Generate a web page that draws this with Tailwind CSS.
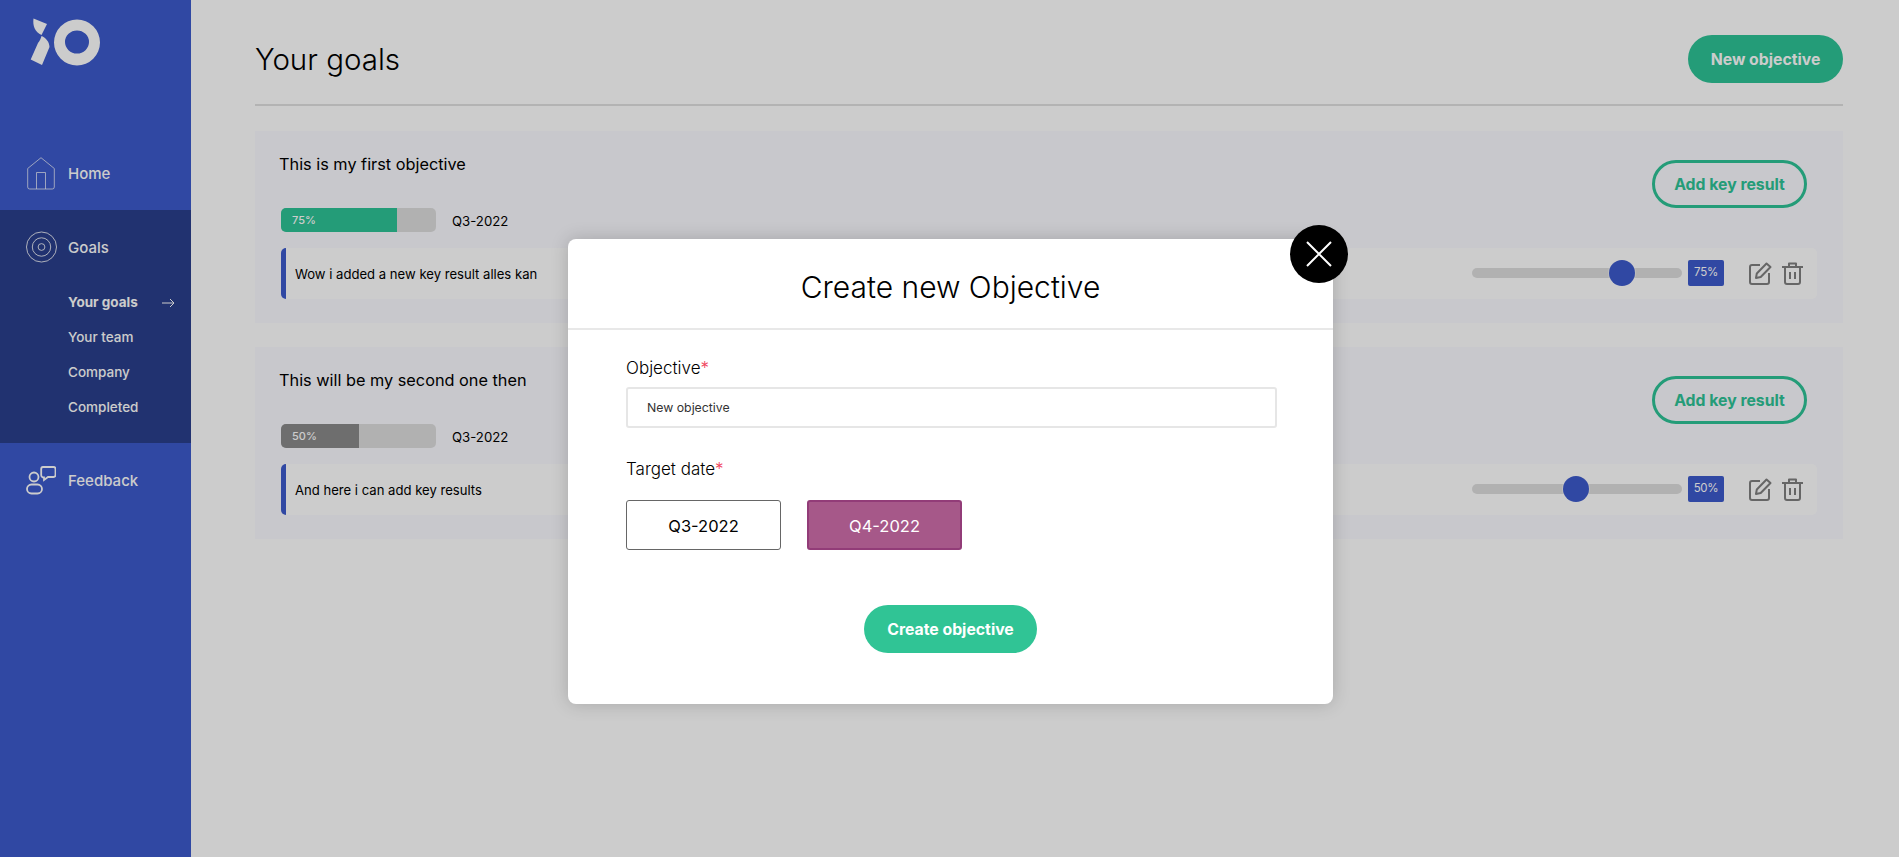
<!DOCTYPE html>
<html lang="en">
<head>
  <meta charset="UTF-8" />
  <title>Your goals</title>
  <script src="https://cdn.jsdelivr.net/npm/@tailwindcss/browser@4"></script>
</head>
<body class="relative h-screen overflow-hidden bg-white font-['Inter',sans-serif] text-black">

  <div class="flex h-full">
    <!-- Sidebar -->
    <aside class="w-[191px] shrink-0 bg-[#3c5acc] text-white">
      <div class="h-[137px] pl-[30px] pt-[18px]">
        <svg width="72" height="48" viewBox="0 0 72 48" fill="#fff">
          <path d="M3.5 0.5L17 6L11.5 17C5 14 2.5 8 3.5 0.5Z" />
          <path d="M11.5 18C16 20 19.5 24 19.5 29L12 47L0.7 41.5L8 25C9.5 23 11 20.5 11.5 18Z" />
          <path fill-rule="evenodd" d="M47 1.5a23 23 0 1 1 0 46a23 23 0 1 1 0-46ZM47 12.5a12 11.5 0 1 0 0 23a12 11.5 0 1 0 0-23Z" />
        </svg>
      </div>

      <a class="flex h-[73px] items-center gap-[13px] pl-[27px] text-[15px] font-medium">
        <svg width="28" height="33" viewBox="0 0 28 33" fill="none" stroke="#fff" stroke-opacity=".7" stroke-width="1">
          <path d="M14 .7L27.3 11.5V30a2 2 0 0 1-2 2H2.700a2 2 0 0 1-2-2V11.500Z" />
          <path d="M9.500 32V15.500h9V32" />
        </svg>
        <span class="pt-[2px]">Home</span>
      </a>

      <div class="h-[233px] bg-[#2a3f8c]">
        <a class="flex h-[74px] items-center gap-[11px] pl-[26px] text-[15px] font-medium">
          <svg width="31" height="32" viewBox="0 0 32 32" fill="none" stroke="#fff" stroke-opacity=".85" stroke-width="1">
            <circle cx="16" cy="16" r="15.500" />
            <circle cx="16" cy="16" r="9.500" />
            <circle cx="16" cy="16" r="3.500" />
          </svg>
          <span class="pt-[2px]">Goals</span>
        </a>
        <ul class="pl-[68px] pr-[16px] pt-[1px] text-[13.5px] font-medium">
          <li class="flex h-[35px] items-center justify-between font-bold">
            Your goals
            <svg width="13" height="10" viewBox="0 0 13 10" fill="none" stroke="#fff" stroke-width="1"><path d="M0 5h12M8 1l4 4l-4 4" /></svg>
          </li>
          <li class="flex h-[35px] items-center">Your team</li>
          <li class="flex h-[35px] items-center">Company</li>
          <li class="flex h-[35px] items-center">Completed</li>
        </ul>
      </div>

      <a class="flex h-[74px] items-center gap-[12px] pl-[26px] text-[15px] font-medium">
        <svg width="30" height="29" viewBox="0 0 30 29" fill="none" stroke="#fff" stroke-width="1.800">
          <circle cx="8" cy="11" r="4.500" />
          <rect x="1" y="18.500" width="15" height="9" rx="4.500" />
          <path d="M17 1h10.500a2 2 0 0 1 2 2v6a2 2 0 0 1-2 2H22L18 14V11.500a2.500 2.500 0 0 1-2.800-2.500V3a2 2 0 0 1 1.800-2Z" />
        </svg>
        <span class="pt-[2px]">Feedback</span>
      </a>
    </aside>

    <!-- Main -->
    <main class="flex-1 pl-[64px] pr-[56px]">
      <header class="flex h-[106px] items-start justify-between border-b-2 border-[#e0e0e0] pt-[35px]">
        <h1 class="text-[29.5px] font-light leading-[48px]">Your goals</h1>
        <button class="h-[48px] w-[155px] rounded-full bg-[#2dc396] pt-[1px] text-[15.8px] font-bold text-white">New objective</button>
      </header>

      <section class="mt-[25px] flex flex-col gap-[24px]">
        <!-- Objective 1 -->
        <article class="h-[192px] bg-[#fafaff] px-[26px]">
          <div class="flex items-start justify-between pr-[10px] pt-[29px]">
            <h2 class="ml-[-2px] text-[16.3px] leading-[8px]">This is my first objective</h2>
            <button class="h-[48px] w-[155px] rounded-full border-[3px] border-[#2dc396] pt-[1px] text-[15.8px] font-bold text-[#2dc396]">Add key result</button>
          </div>
          <div class="flex items-center gap-[16px]">
            <div class="h-[24px] w-[155px] overflow-hidden rounded-[5px] bg-[#dedede]">
              <div class="flex h-full w-[75%] items-center bg-[#2dc396] pl-[11px] text-[11px] font-medium text-white">75%</div>
            </div>
            <span class="pt-[3px] text-[13.2px]">Q3-2022</span>
          </div>
          <div class="mt-[16px] flex h-[51px] items-center justify-between rounded-[5px] border-l-[5px] border-[#3c5acc] bg-white pl-[9px] pr-[14px]">
            <span class="pt-[2px] text-[13.1px]">Wow i added a new key result alles kan</span>
            <div class="mt-[-1px] flex items-center">
              <div class="relative h-[10px] w-[210px] rounded-full bg-[#dedede]">
                <span class="absolute left-[137px] top-[-8px] size-[26px] rounded-full bg-[#3c5acc] ring-1 ring-white/40"></span>
              </div>
              <span class="ml-[6px] flex h-[26px] w-[36px] items-center justify-center rounded-[2px] bg-[#3c5acc] text-[11.5px] tracking-[-0.3px] text-white">75%</span>
              <svg class="ml-[25px]" width="23" height="23" viewBox="0 0 23 23" fill="none" stroke="#808080" stroke-width="2" stroke-linejoin="round">
                <path d="M11 3H3a2 2 0 0 0-2 2v15a2 2 0 0 0 2 2h15a2 2 0 0 0 2-2v-9" />
                <path d="M7 16l.8-4.500L17.500 1.500l4 3.500l-9.800 10Z" />
              </svg>
              <svg class="ml-[10px]" width="21" height="23" viewBox="0 0 21 23" fill="none" stroke="#808080" stroke-width="2" stroke-linejoin="round">
                <path d="M0 5h21M7 5V1.500h7V5M3 5v15a2 2 0 0 0 2 2h11a2 2 0 0 0 2-2V5M8 10v7M13 10v7" />
              </svg>
            </div>
          </div>
        </article>

        <!-- Objective 2 -->
        <article class="h-[192px] bg-[#fafaff] px-[26px]">
          <div class="flex items-start justify-between pr-[10px] pt-[29px]">
            <h2 class="ml-[-2px] text-[16.3px] leading-[8px]">This will be my second one then</h2>
            <button class="h-[48px] w-[155px] rounded-full border-[3px] border-[#2dc396] pt-[1px] text-[15.8px] font-bold text-[#2dc396]">Add key result</button>
          </div>
          <div class="flex items-center gap-[16px]">
            <div class="h-[24px] w-[155px] overflow-hidden rounded-[5px] bg-[#dedede]">
              <div class="flex h-full w-[50%] items-center bg-[#8a8a8a] pl-[11px] text-[11px] font-medium text-white">50%</div>
            </div>
            <span class="pt-[3px] text-[13.2px]">Q3-2022</span>
          </div>
          <div class="mt-[16px] flex h-[51px] items-center justify-between rounded-[5px] border-l-[5px] border-[#3c5acc] bg-white pl-[9px] pr-[14px]">
            <span class="pt-[2px] text-[13.1px]">And here i can add key results</span>
            <div class="mt-[-1px] flex items-center">
              <div class="relative h-[10px] w-[210px] rounded-full bg-[#dedede]">
                <span class="absolute left-[91px] top-[-8px] size-[26px] rounded-full bg-[#3c5acc] ring-1 ring-white/40"></span>
              </div>
              <span class="ml-[6px] flex h-[26px] w-[36px] items-center justify-center rounded-[2px] bg-[#3c5acc] text-[11.5px] tracking-[-0.3px] text-white">50%</span>
              <svg class="ml-[25px]" width="23" height="23" viewBox="0 0 23 23" fill="none" stroke="#808080" stroke-width="2" stroke-linejoin="round">
                <path d="M11 3H3a2 2 0 0 0-2 2v15a2 2 0 0 0 2 2h15a2 2 0 0 0 2-2v-9" />
                <path d="M7 16l.8-4.500L17.500 1.500l4 3.500l-9.800 10Z" />
              </svg>
              <svg class="ml-[10px]" width="21" height="23" viewBox="0 0 21 23" fill="none" stroke="#808080" stroke-width="2" stroke-linejoin="round">
                <path d="M0 5h21M7 5V1.500h7V5M3 5v15a2 2 0 0 0 2 2h11a2 2 0 0 0 2-2V5M8 10v7M13 10v7" />
              </svg>
            </div>
          </div>
        </article>
      </section>
    </main>
  </div>

  <!-- Modal -->
  <div class="absolute inset-0 bg-black/20 pl-[568px] pt-[239px]">
    <div class="relative h-[465px] w-[765px] rounded-[8px] bg-white shadow-[0_0_18px_rgba(0,0,0,0.18)]">
      <button class="absolute right-[-15px] top-[-14px] flex size-[58px] items-center justify-center rounded-full bg-black">
        <svg width="26" height="26" viewBox="0 0 26 26" fill="none" stroke="#fff" stroke-width="2"><path d="M1 1l24 24M25 1L1 25" /></svg>
      </button>

      <h2 class="flex h-[91px] items-center justify-center border-b-2 border-[#e8e8e8] pt-[8px] text-[30px] font-light">Create new Objective</h2>

      <form class="px-[58px] pt-[26px]">
        <label class="block text-[17px] font-light leading-[24px]">Objective<span class="text-[#f0435c]">*</span></label>
        <input type="text" value="New objective" class="mt-[7px] block h-[41px] w-[651px] rounded-[3px] border-2 border-[#e6e6e6] pl-[19px] text-[12.3px] text-[#333]" />

        <label class="mt-[29px] block text-[17px] font-light leading-[24px]">Target date<span class="text-[#f0435c]">*</span></label>
        <div class="mt-[19px] flex gap-[26px]">
          <button type="button" class="h-[50px] w-[155px] rounded-[3px] border-[1.5px] border-[#666] pt-[2px] text-[16.5px]">Q3-2022</button>
          <button type="button" class="h-[50px] w-[155px] rounded-[3px] border-2 border-[#923c78] bg-[#a65889] pt-[2px] text-[16.5px] text-white">Q4-2022</button>
        </div>

        <div class="mt-[55px] flex justify-center">
          <button type="button" class="h-[48px] w-[173px] rounded-full bg-[#30c495] pt-[1px] text-[15.8px] font-bold text-white">Create objective</button>
        </div>
      </form>
    </div>
  </div>
</body>
</html>
